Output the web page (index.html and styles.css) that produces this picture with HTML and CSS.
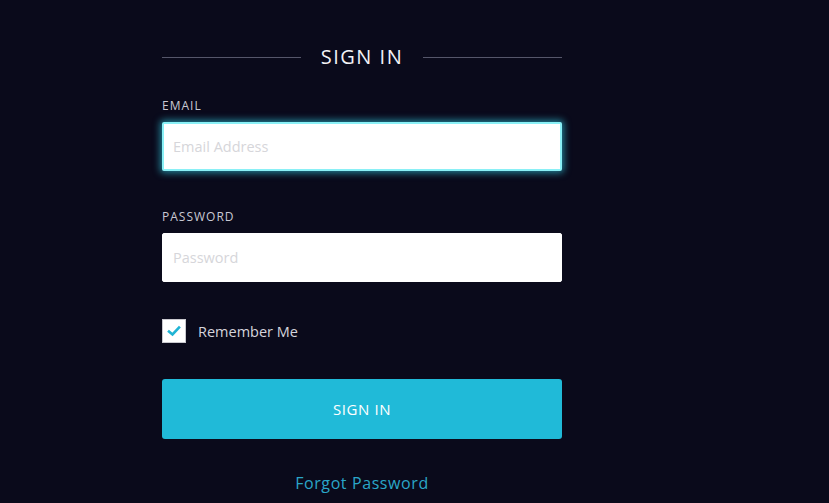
FILE: index.html
```html
<!DOCTYPE html>
<html lang="en">
<head>
<meta charset="utf-8">
<title>Sign In</title>
<link rel="stylesheet" href="styles.css">
</head>
<body>
<main class="panel">
  <div class="title-row">
    <span class="rule"></span>
    <h1 class="title">SIGN IN</h1>
    <span class="rule"></span>
  </div>
  <form class="form">
    <label class="label label-first" for="email">EMAIL</label>
    <input class="field field-focus" id="email" type="email" placeholder="Email Address">
    <label class="label label-next" for="pw">PASSWORD</label>
    <input class="field" id="pw" type="password" placeholder="Password">
    <div class="remember">
      <span class="check">
        <svg width="14" height="12" viewBox="0 0 14 12"><path d="M2 6.5 L5.5 9.5 L12 2.5" fill="none" stroke="#20b4d4" stroke-width="2.6" stroke-linecap="square"/></svg>
      </span>
      <span class="remember-text">Remember Me</span>
    </div>
    <button class="btn" type="button">SIGN IN</button>
    <a class="forgot" href="#">Forgot Password</a>
  </form>
</main>
</body>
</html>
```
FILE: styles.css
```css
html, body {
  margin: 0;
  padding: 0;
  background: #0a0a1b;
  height: 100%;
}
body {
  font-family: "Open Sans", "Noto Sans", sans-serif;
  color: #e8e8ee;
  overflow: hidden;
}
.panel {
  width: 400px;
  margin-left: 162px;
  padding-top: 43px;
}
.title-row {
  display: flex;
  align-items: center;
  height: 28px;
}
.rule {
  flex: 1;
  height: 1px;
  background: #55566a;
}
.title {
  margin: 0 20px;
  font-size: 20px;
  font-weight: 400;
  letter-spacing: 1.5px;
  line-height: 28px;
  color: #f2f2f6;
}
.form {
  display: flex;
  flex-direction: column;
}
.label {
  font-size: 12px;
  line-height: 16px;
  letter-spacing: 1px;
  color: #c9c9d3;
  margin-bottom: 8px;
}
.label-first { margin-top: 27px; }
.label-next { margin-top: 38px; }
.field {
  box-sizing: border-box;
  height: 49px;
  width: 100%;
  border: 1px solid #ffffff;
  border-radius: 2px;
  background: #ffffff;
  padding: 0 10px;
  font-family: "Open Sans", "Noto Sans", sans-serif;
  font-size: 14.5px;
  color: #333;
  outline: none;
}
.field::placeholder { color: #d6d6da; }
.field-focus {
  border: 2px solid #8af0f6;
  box-shadow: 0 0 7px 2px rgba(50, 205, 230, 0.6);
  padding-left: 9px;
}
.remember {
  display: flex;
  align-items: center;
  margin-top: 37px;
  height: 24px;
}
.check {
  box-sizing: border-box;
  width: 24px;
  height: 24px;
  background: #ffffff;
  border: 1px solid #c9c9cf;
  display: flex;
  align-items: center;
  justify-content: center;
}
.remember-text {
  margin-left: 12px;
  font-size: 14.5px;
  color: #d4d4dc;
}
.btn {
  margin-top: 36px;
  height: 60px;
  width: 100%;
  border: none;
  border-radius: 3px;
  background: #20bad8;
  color: #ffffff;
  font-family: "Open Sans", "Noto Sans", sans-serif;
  font-size: 15px;
  font-weight: 500;
  letter-spacing: 0.6px;
}
.forgot {
  margin-top: 34px;
  align-self: center;
  font-size: 16px;
  line-height: 20px;
  letter-spacing: 0.6px;
  color: #2aa6c8;
  text-decoration: none;
}
```
